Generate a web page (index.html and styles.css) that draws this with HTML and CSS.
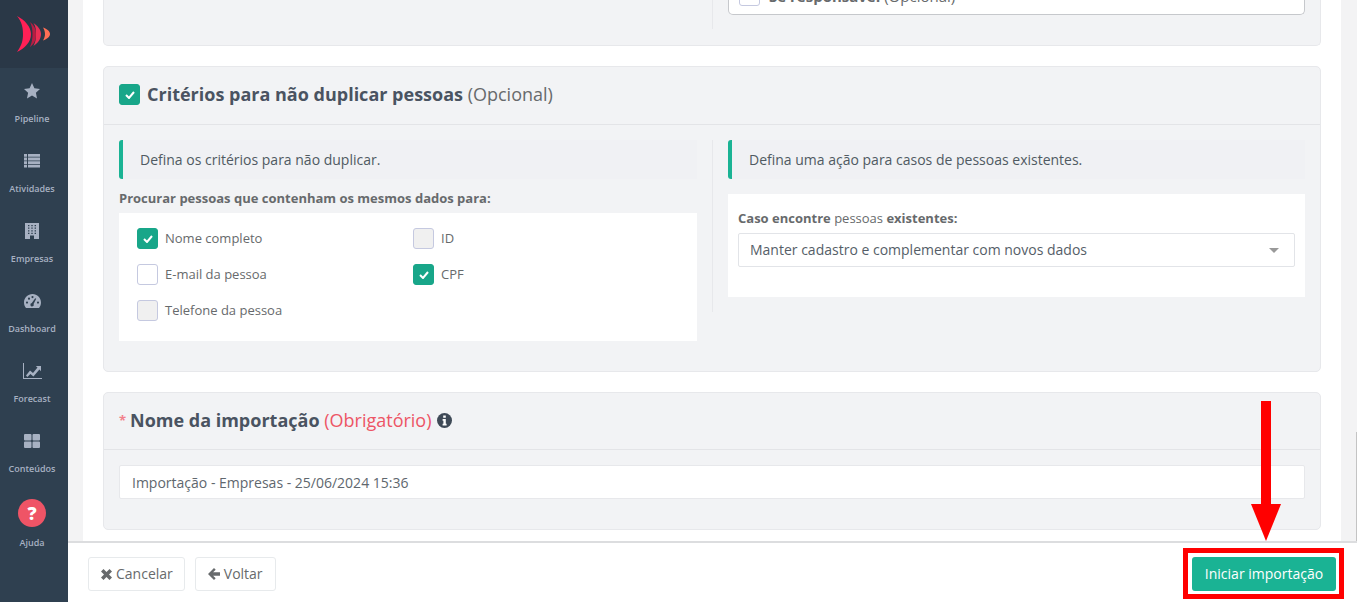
FILE: index.html

```html
<!DOCTYPE html>
<html lang="pt-BR">
<head>
  <meta charset="UTF-8">
  <title>Importação</title>
  <meta name="viewport" content="width=device-width, initial-scale=1.0">
  <link rel="stylesheet" href="styles.css">
</head>
<body>

<div class="app">

  <nav class="sidebar">
    <div class="logo">
      <svg width="34" height="38" viewBox="0 0 34 38">
        <path d="M0 1 C8 5 14 12 14 19 C14 27 8 33 0 37 C5 30 6 25 6 19 C6 13 5 7 0 1Z" fill="#ff2056"/>
        <path d="M13 7 C17 10 19 14 19 19 C19 25 17 29 13 32 C15 27 15.500 23 15.500 19 C15.500 15 15 11 13 7Z" fill="#b81c42"/>
        <path d="M16.500 8 C21 11 24 15 24 19 C24 24 21 28 16.500 31 C19 26 19 23 19 19 C19 15 19 12 16.500 8Z" fill="#ea2f55"/>
        <path d="M26 12.500 C30 14 33 16 33 19 C33 22 30 24 26 25.500 C27.500 23 28 21 28 19 C28 17 27.500 15 26 12.500Z" fill="#ff6f55"/>
      </svg>
    </div>
    <a class="nav-item">
      <svg class="nav-icon" width="16" height="16" viewBox="0 0 16 16"><polygon points="8,0 10.400,5.200 16,5.900 11.900,9.800 13,15.400 8,12.600 3,15.400 4.100,9.800 0,5.900 5.600,5.200"/></svg>
      <span>Pipeline</span>
    </a>
    <a class="nav-item">
      <svg class="nav-icon" width="16" height="14" viewBox="0 0 16 14"><path d="M0 0h3v2.800H0zM4 0h12v2.800H4zM0 3.600h3v2.800H0zM4 3.600h12v2.800H4zM0 7.200h3V10H0zM4 7.200h12V10H4zM0 10.800h3v2.800H0zM4 10.800h12v2.800H4z"/></svg>
      <span>Atividades</span>
    </a>
    <a class="nav-item">
      <svg class="nav-icon" width="14" height="16" viewBox="0 0 14 16"><path fill-rule="evenodd" d="M0 0h14v16H0zM3 2v1.200h1.400V2zM6.300 2v1.200h1.400V2zM9.600 2v1.200H11V2zM3 4.600v1.200h1.400V4.600zM6.300 4.600v1.200h1.400V4.600zM9.600 4.600v1.200H11V4.600zM3 7.200v1.200h1.400V7.200zM6.300 7.200v1.200h1.400V7.200zM9.600 7.200v1.200H11V7.200zM3 9.800V11h1.400V9.800zM6.300 9.800V11h1.400V9.800zM9.600 9.800V11H11V9.800zM5 12.500V16h4v-3.500z"/></svg>
      <span>Empresas</span>
    </a>
    <a class="nav-item">
      <svg class="nav-icon" width="17" height="14" viewBox="0 0 17 14"><path fill-rule="evenodd" d="M8.500 0C3.800 0 0 3.800 0 8.500c0 2.100.7 3.900 2 5.500h13c1.300-1.600 2-3.400 2-5.500C17 3.800 13.200 0 8.500 0zM3 7.500a1.100 1.100 0 1 0 0 2.200 1.100 1.100 0 0 0 0-2.200zM5 3.600a1.100 1.100 0 1 0 0 2.200 1.100 1.100 0 0 0 0-2.200zM8.500 2a1.100 1.100 0 1 0 0 2.200 1.100 1.100 0 0 0 0-2.200zM14 7.500a1.100 1.100 0 1 0 0 2.200 1.100 1.100 0 0 0 0-2.200zM11.200 4.300L7.800 9a1.700 1.700 0 1 0 1.800.9l2.600-5.100z"/></svg>
      <span>Dashboard</span>
    </a>
    <a class="nav-item">
      <svg class="nav-icon" width="19" height="16" viewBox="0 0 19 16"><path d="M0 0h1v15h18v1H0z"/><path d="M3 12.500L7 7.500l3 2.500 4.500-5.500-1.700-1.500H18v5.200l-1.600-1.700-6 7-3-2.500-3 3z"/></svg>
      <span>Forecast</span>
    </a>
    <a class="nav-item">
      <svg class="nav-icon" width="16" height="14" viewBox="0 0 16 14"><path d="M1 0h5.500a1 1 0 0 1 1 1v4.500a1 1 0 0 1-1 1H1a1 1 0 0 1-1-1V1a1 1 0 0 1 1-1zM9.500 0H15a1 1 0 0 1 1 1v4.500a1 1 0 0 1-1 1H9.500a1 1 0 0 1-1-1V1a1 1 0 0 1 1-1zM1 7.500h5.500a1 1 0 0 1 1 1V13a1 1 0 0 1-1 1H1a1 1 0 0 1-1-1V8.500a1 1 0 0 1 1-1zM9.500 7.500H15a1 1 0 0 1 1 1V13a1 1 0 0 1-1 1H9.500a1 1 0 0 1-1-1V8.500a1 1 0 0 1 1-1z"/></svg>
      <span>Conteúdos</span>
    </a>
    <a class="nav-item help">
      <span class="help-circle">?</span>
      <span>Ajuda</span>
    </a>
  </nav>

  <div class="main">
    <div class="content">
      <div class="page">

        <section class="card card-cut">
          <div class="cut-divider">
            <div class="cut-box">
              <span class="check"></span>
              <span class="cut-text"><strong>Se responsável</strong> (Opcional)</span>
            </div>
          </div>
        </section>

        <section class="card">
          <header class="card-head">
            <span class="check on big"><svg width="10" height="8" viewBox="0 0 10 8"><path d="M1 4l3 3 5-6" fill="none" stroke="#fff" stroke-width="2"/></svg></span>
            <h2>Critérios para não duplicar pessoas <small>(Opcional)</small></h2>
          </header>
          <div class="card-body cols">
            <div class="col">
              <div class="note">Defina os critérios para não duplicar.</div>
              <p class="field-title">Procurar pessoas que contenham os mesmos dados para:</p>
              <div class="panel options">
                <label class="option"><span class="check on"><svg width="10" height="8" viewBox="0 0 10 8"><path d="M1 4l3 3 5-6" fill="none" stroke="#fff" stroke-width="2"/></svg></span>Nome completo</label>
                <label class="option"><span class="check off"></span>ID</label>
                <label class="option"><span class="check"></span>E-mail da pessoa</label>
                <label class="option"><span class="check on"><svg width="10" height="8" viewBox="0 0 10 8"><path d="M1 4l3 3 5-6" fill="none" stroke="#fff" stroke-width="2"/></svg></span>CPF</label>
                <label class="option"><span class="check off"></span>Telefone da pessoa</label>
              </div>
            </div>
            <div class="col col-right">
              <div class="note">Defina uma ação para casos de pessoas existentes.</div>
              <div class="panel action">
                <p class="select-label"><strong>Caso encontre</strong> pessoas <strong>existentes:</strong></p>
                <div class="select">
                  <span>Manter cadastro e complementar com novos dados</span>
                  <i class="caret"></i>
                </div>
              </div>
            </div>
          </div>
        </section>

        <section class="card">
          <header class="card-head name-head">
            <span class="req">*</span>
            <h2>Nome da importação <small class="red">(Obrigatório)</small></h2>
            <svg width="15" height="15" viewBox="0 0 15 15"><circle cx="7.500" cy="7.500" r="7.500" fill="#3f4a57"/><path d="M6.200 2.600h2.600v2.100H6.200zM5.600 6h3.200v4.700h.8v1.700H5.600v-1.700h.8V7.700h-.8z" fill="#fff"/></svg>
          </header>
          <div class="card-body name-body">
            <div class="text-input">Importação - Empresas - 25/06/2024 15:36</div>
          </div>
        </section>

      </div>
    </div>

    <footer class="footer">
      <a class="btn">
        <svg width="11" height="11" viewBox="0 0 11 11"><path d="M0 2.500L2.500 0l3 3 3-3L11 2.500l-3 3 3 3L8.500 11l-3-3-3 3L0 8.500l3-3z" fill="#676a6c"/></svg>
        Cancelar
      </a>
      <a class="btn">
        <svg width="12" height="12" viewBox="0 0 12 12"><path d="M6 0l1.700 1.700-2.600 2.600H12v3.400H5.100l2.600 2.600L6 12 0 6z" fill="#676a6c"/></svg>
        Voltar
      </a>
      <a class="btn-primary">Iniciar importação</a>
    </footer>
  </div>

</div>

<!-- anotacao vermelha por cima do botao -->
<div class="mark-box"></div>
<div class="mark-shaft"></div>
<div class="mark-head"></div>
<div class="scroll-thumb"></div>

</body>
</html>
```

FILE: styles.css

```css
* {
  box-sizing: border-box;
}
html, body {
  margin: 0;
  height: 100%;
  overflow: hidden;
}
body {
  font-family: "Open Sans", sans-serif;
  font-size: 14px;
  color: #676a6c;
  background: #fff;
}
.app {
  display: flex;
  height: 602px;
}

/* sidebar */
.sidebar {
  width: 68px;
  flex: none;
  background: #2f4050;
  color: #a7b1c2;
}
.logo {
  height: 68px;
  background: #2a3847;
  display: flex;
  align-items: center;
  padding-left: 17px;
}
.nav-item {
  height: 70px;
  display: flex;
  flex-direction: column;
  align-items: center;
  padding: 15px 4px 0 0;
  font-size: 9px;
  font-weight: 600;
  line-height: 12px;
}
.nav-icon {
  fill: #a7b1c2;
  height: 16px;
  margin-bottom: 14px;
}
.help {
  padding-top: 0;
  margin-top: 11px;
}
.help-circle {
  width: 28px;
  height: 28px;
  border-radius: 50%;
  background: #ef5466;
  color: #fff;
  font-size: 18px;
  font-weight: 800;
  line-height: 28px;
  text-align: center;
  margin-bottom: 10px;
}

/* main */
.main {
  flex: 1;
  min-width: 0;
  display: flex;
  flex-direction: column;
}
.content {
  flex: 1;
  min-height: 0;
  overflow: hidden;
  background: #f3f3f4;
  padding: 0 16px 0 15px;
}
.page {
  background: #fff;
  height: 100%;
  padding: 0 20px;
}
.card {
  background: #f2f3f5;
  border: 1px solid #e7e8eb;
  border-radius: 5px;
  margin-bottom: 20px;
}
.card-cut {
  height: 46px;
  border-top: 0;
  border-radius: 0 0 5px 5px;
  overflow: hidden;
  display: flex;
  justify-content: flex-end;
  align-items: flex-end;
  padding: 0 15px 16px 0;
}
.cut-divider {
  width: 593px;
  height: 29px;
  border-left: 1px solid #e7e8eb;
  padding-left: 15px;
  display: flex;
  align-items: flex-end;
}
.cut-box {
  width: 100%;
  height: 15px;
  flex: none;
  margin-bottom: 14px;
  background: #fff;
  border: 1px solid #c6c8cc;
  border-top: 0;
  border-radius: 0 0 5px 5px;
  display: flex;
  align-items: flex-end;
  padding: 0 0 8px 10px;
  overflow: hidden;
}
.cut-text {
  margin-left: 2px;
  font-size: 15px;
  line-height: 18px;
  margin-bottom: 1px;
}
.card-head {
  height: 58px;
  border-bottom: 1px solid #e3e4e7;
  display: flex;
  align-items: center;
  padding: 0 0 4px 15px;
}
.name-head {
  height: 57px;
  padding-bottom: 2px;
}
.card-head h2 {
  margin: 0;
  font-size: 18px;
  font-weight: 700;
  color: #4a5361;
}
.card-head small {
  font-size: 18px;
  font-weight: 400;
  color: #676a6c;
}
.card-head small.red {
  color: #ed5565;
}
.card-head svg {
  flex: none;
}
.check.big {
  margin-top: 2px;
}
.name-head > svg {
  margin: 1px 0 0 5px;
}
.req {
  color: #f2808c;
  font-size: 13px;
  font-weight: 700;
  width: 11px;
}
.card-body {
  padding: 15px;
}
.cols {
  display: flex;
  height: 246px;
}
.col {
  width: 578px;
  flex: none;
}
.col-right {
  margin-left: 15px;
  padding-left: 15px;
  width: 593px;
  height: 172px;
  border-left: 1px solid #e7e8eb;
}
.note {
  height: 39px;
  line-height: 39px;
  background: #f0f1f4;
  border-left: 4px solid #1ab394;
  border-radius: 3px 0 0 3px;
  padding-left: 17px;
  color: #4f5a62;
}
.field-title {
  margin: 11px 0 7px;
  font-size: 13px;
  line-height: 16px;
  font-weight: 700;
}
.panel {
  background: #fff;
}
.options {
  height: 128px;
  padding: 15px 18px 0;
  display: grid;
  grid-template-columns: 276px 1fr;
  grid-auto-rows: 36px;
}
.option {
  display: flex;
  align-items: flex-start;
  line-height: 21px;
  font-size: 13px;
}
.check {
  width: 21px;
  height: 21px;
  flex: none;
  border: 1px solid #c5c9e0;
  border-radius: 3px;
  background: #fff;
  margin-right: 7px;
  display: inline-flex;
  align-items: center;
  justify-content: center;
}
.check.off {
  background: #f0f0f0;
}
.check.on {
  background: #18a689;
  border-color: #18a689;
}
.action {
  margin-top: 15px;
  height: 103px;
  padding: 16px 10px 0;
}
.select-label {
  margin: 0 0 7px;
  font-size: 13px;
  line-height: 16px;
}
.select {
  height: 34px;
  border: 1px solid #e2e4e8;
  border-radius: 2px;
  display: flex;
  align-items: center;
  justify-content: space-between;
  padding: 0 15px 2px 11px;
  color: #555e68;
}
.caret {
  width: 0;
  height: 0;
  margin-top: 2px;
  border-left: 5px solid transparent;
  border-right: 5px solid transparent;
  border-top: 5px solid #999;
}
.name-body {
  padding-bottom: 30px;
}
.text-input {
  height: 34px;
  line-height: 34px;
  background: #fff;
  border: 1px solid #e7e8eb;
  border-radius: 2px;
  padding-left: 12px;
  color: #60676e;
}

/* footer */
.footer {
  height: 61px;
  flex: none;
  border-top: 2px solid #dcdddf;
  background: #fff;
  display: flex;
  align-items: flex-start;
  padding: 14px 21px 0 20px;
  gap: 10px;
}
.btn {
  height: 34px;
  border: 1px solid #e7eaec;
  border-radius: 3px;
  display: flex;
  align-items: center;
  gap: 4px;
  padding: 0 12px 2px;
  color: #676a6c;
}
.btn svg {
  margin-top: 2px;
}
.btn:first-child {
  padding-right: 11px;
}
.btn-primary {
  margin-left: auto;
  width: 144px;
  height: 34px;
  line-height: 34px;
  text-align: center;
  background: #1ab394;
  border-radius: 3px;
  color: #fff;
  font-weight: 500;
}

/* annotation */
.mark-box {
  position: absolute;
  left: 1183px;
  top: 548px;
  width: 161px;
  height: 51px;
  border: 5px solid #ff0000;
}
.mark-shaft {
  position: absolute;
  left: 1261px;
  top: 401px;
  width: 10px;
  height: 104px;
  background: #ff0000;
}
.mark-head {
  position: absolute;
  left: 1251px;
  top: 504px;
  width: 0;
  height: 0;
  border-left: 15px solid transparent;
  border-right: 15px solid transparent;
  border-top: 37px solid #ff0000;
}
.scroll-thumb {
  position: absolute;
  left: 1356px;
  top: 432px;
  width: 1px;
  height: 109px;
  background: #c4c4c4;
}
```
